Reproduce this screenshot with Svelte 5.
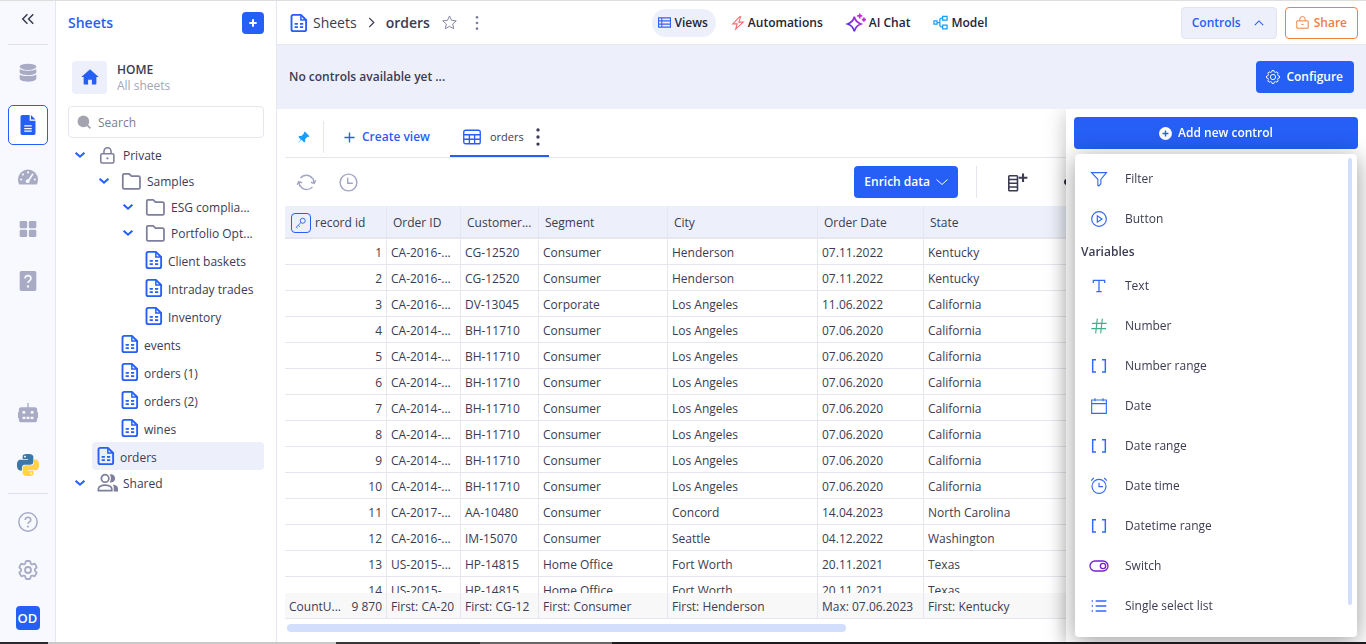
<script lang="ts">
    type TreeItem = { label: string; icon: string; depth: number; branch?: boolean; active?: boolean };

    let search = $state('');
    let menuOpen = $state(true);

    // outline of a cog wheel inside a 24x24 box
    function cog(teeth: number, inner: number, outer: number) {
        const points: string[] = [];
        const step = (Math.PI * 2) / teeth;
        for (let i = 0; i < teeth; i++) {
            [[-0.32, inner], [-0.18, outer], [0.18, outer], [0.32, inner]].forEach(([shift, r]) => {
                const a = (i + shift) * step;
                points.push(`${(12 + r * Math.sin(a)).toFixed(2)} ${(12 - r * Math.cos(a)).toFixed(2)}`);
            });
        }
        return 'M' + points.join('L') + 'Z';
    }

    const icons: Record<string, string> = {
        collapse: '<g stroke-width="2.6"><path d="M11 4l-8 8 8 8M21 4l-8 8 8 8"/></g>',
        database: '<g fill="currentColor" stroke="none"><ellipse cx="12" cy="4.6" rx="10" ry="3.8"/><path d="M2 7.2c2.4 2.6 17.6 2.6 20 0v3.6c0 5-20 5-20 0zM2 13.7c2.4 2.6 17.6 2.6 20 0v5c0 5-20 5-20 0z"/></g>',
        doc: '<path fill="currentColor" stroke="none" d="M5 0h9v7h7v15a2 2 0 0 1-2 2H5a2 2 0 0 1-2-2V2a2 2 0 0 1 2-2zM15.5 0l5.500 5.500h-5.500z"/><path stroke="#fff" stroke-width="1.5" d="M7.500 13h9M7.500 16.200h9M7.500 19.400h9"/>',
        gauge: '<path fill="currentColor" stroke="none" d="M12 3A12 12 0 0 0 0 15c0 2.500.7 4.500 1.500 6h21c.8-1.500 1.500-3.500 1.500-6A12 12 0 0 0 12 3z"/><g fill="#f8f9ff" stroke="none"><circle cx="12" cy="6.500" r="1.300"/><circle cx="6" cy="9" r="1.300"/><circle cx="3.800" cy="15" r="1.300"/><circle cx="20.200" cy="15" r="1.300"/><circle cx="11.500" cy="17" r="2.300"/></g><path stroke="#f8f9ff" stroke-width="2" d="M12 17l6-9"/>',
        grid: '<g fill="currentColor" stroke="none"><rect x="2" y="2.500" width="9" height="8.500" rx="1.500"/><rect x="13" y="2.500" width="9" height="8.500" rx="1.500"/><rect x="2" y="13" width="9" height="8.500" rx="1.500"/><rect x="13" y="13" width="9" height="8.500" rx="1.500"/></g>',
        quiz: '<rect x="2" y="0" width="20" height="24" rx="2" fill="currentColor" stroke="none"/><path stroke="#f8f9ff" stroke-width="2" d="M8.500 9c0-4.500 7-4.500 7 0 0 3-3.500 2.500-3.500 5.500"/><circle cx="12" cy="18.500" r="1.400" fill="#f8f9ff" stroke="none"/>',
        robot: '<rect x="1" y="5" width="22" height="18" rx="3" fill="currentColor" stroke="none"/><path d="M12 0v6M.8 11v7M23.200 11v7" stroke-width="1.600"/><g fill="#f8f9ff" stroke="none"><circle cx="7" cy="11" r="1.800"/><circle cx="17" cy="11" r="1.800"/><rect x="5.500" y="16.500" width="3.400" height="2.800"/><rect x="10.300" y="16.500" width="3.400" height="2.800"/><rect x="15.100" y="16.500" width="3.400" height="2.800"/></g>',
        python: '<path fill="#3b77a8" stroke="none" d="M14.25.18l.9.2.73.26.59.3.45.32.34.34.25.34.16.33.1.3.04.26.02.2-.01.13V8.5l-.05.63-.13.55-.21.46-.26.38-.3.31-.33.25-.35.19-.35.14-.33.1-.3.07-.26.04-.21.02H8.77l-.69.05-.59.14-.5.22-.41.27-.33.32-.27.35-.2.36-.15.37-.1.35-.07.32-.04.27-.02.21v3.06H3.17l-.21-.03-.28-.07-.32-.12-.35-.18-.36-.26-.36-.36-.35-.46-.32-.59-.28-.73-.21-.88-.14-1.05-.05-1.23.06-1.22.16-1.04.24-.87.32-.71.36-.57.4-.44.42-.33.42-.24.4-.16.36-.1.32-.05.24-.01h.16l.06.01h8.16v-.83H6.18l-.01-2.75-.02-.37.05-.34.11-.31.17-.28.25-.26.31-.23.38-.2.44-.18.51-.15.58-.12.64-.1.71-.06.77-.04.84-.02 1.27.05zm-6.3 1.98l-.23.33-.08.41.08.41.23.34.33.22.41.09.41-.09.33-.22.23-.34.08-.41-.08-.41-.23-.33-.33-.22-.41-.09-.41.09z"/><path fill="#ffd343" stroke="none" d="M21.04 6.11l.28.06.32.12.35.18.36.27.36.35.35.47.32.59.28.73.21.88.14 1.04.05 1.23-.06 1.23-.16 1.04-.24.86-.32.71-.36.57-.4.45-.42.33-.42.24-.4.16-.36.09-.32.05-.24.02-.16-.01h-8.22v.82h5.84l.01 2.76.02.36-.05.34-.11.31-.17.29-.25.25-.31.24-.38.2-.44.17-.51.15-.58.13-.64.09-.71.07-.77.04-.84.01-1.27-.04-1.07-.14-.9-.2-.73-.25-.59-.3-.45-.33-.34-.34-.25-.34-.16-.33-.1-.3-.04-.25-.02-.2.01-.13v-5.34l.05-.64.13-.54.21-.46.26-.38.3-.32.33-.24.35-.2.35-.14.33-.1.3-.06.26-.04.21-.02.13-.01h5.84l.69-.05.59-.14.5-.21.41-.28.33-.32.27-.35.2-.36.15-.36.1-.35.07-.32.04-.28.02-.21V6.07h2.09l.14.01zm-6.47 14.25l-.23.33-.08.41.08.41.23.33.33.23.41.08.41-.08.33-.23.23-.33.08-.41-.08-.41-.23-.33-.33-.23-.41-.08-.41.08z"/>',
        help: '<circle cx="12" cy="12" r="11"/><path stroke-width="2" d="M8.700 9.500c0-4.300 6.600-4.300 6.600 0 0 2.500-3.300 2.300-3.300 4.700"/><circle cx="12" cy="17.500" r="1.300" fill="currentColor" stroke="none"/>',
        gear: '<path d="M9.594 3.94c.09-.542.56-.94 1.11-.94h2.593c.55 0 1.020.398 1.110.94l.213 1.281c.063.374.313.686.645.87.074.04.147.083.22.127.325.196.72.257 1.075.124l1.217-.456a1.125 1.125 0 0 1 1.370.49l1.296 2.247a1.125 1.125 0 0 1-.26 1.431l-1.003.827c-.293.241-.438.613-.43.992a7.723 7.723 0 0 1 0 .255c-.008.378.137.75.43.991l1.004.827c.424.35.534.955.26 1.430l-1.298 2.247a1.125 1.125 0 0 1-1.369.491l-1.217-.456c-.355-.133-.75-.072-1.076.124a6.470 6.470 0 0 1-.22.128c-.331.183-.581.495-.644.869l-.213 1.281c-.09.543-.56.94-1.110.94h-2.594c-.55 0-1.019-.398-1.110-.94l-.213-1.281c-.062-.374-.312-.686-.644-.87a6.520 6.520 0 0 1-.22-.127c-.325-.196-.72-.257-1.076-.124l-1.217.456a1.125 1.125 0 0 1-1.369-.49l-1.297-2.247a1.125 1.125 0 0 1 .26-1.431l1.004-.827c.292-.24.437-.613.43-.991a6.932 6.932 0 0 1 0-.255c.007-.38-.138-.751-.43-.992l-1.004-.827a1.125 1.125 0 0 1-.26-1.430l1.297-2.247a1.125 1.125 0 0 1 1.370-.491l1.216.456c.356.133.751.072 1.076-.124.072-.044.146-.086.22-.128.332-.183.582-.495.644-.869l.214-1.280Z"/><circle cx="12" cy="12" r="3"/>',
        cog: `<path stroke-width="1.6" d="${cog(8, 9, 11.2)}"/><circle cx="12" cy="12" r="4.5" stroke-width="1.6"/>`,
        plus: '<path stroke-width="3" d="M12 1v22M1 12h22"/>',
        home: '<path fill="currentColor" stroke="none" d="M12 1.500L.5 12h3v8.500c0 1 .5 1.500 1.500 1.500h4.500v-6.500h5V22H19c1 0 1.500-.5 1.500-1.500V12h3z"/>',
        search: '<circle cx="11" cy="11" r="10" fill="currentColor" stroke="none"/><path stroke-width="3" d="M17 17l6 6"/>',
        chevron: '<path stroke-width="5" d="M1.500 6.500l10.500 9.500 10.500-9.500"/>',
        up: '<path stroke-width="2.600" d="M2 17l10-10 10 10"/>',
        down: '<path stroke-width="2" d="M1 7l11 10L23 7"/>',
        right: '<path stroke-width="2.600" d="M7 2l10 10L7 22"/>',
        lock: '<rect x="2.500" y="9.500" width="18.500" height="13" rx="2" stroke-width="2.200"/><path stroke-width="2.200" d="M7 9.500V6a5 5 0 0 1 10 0v3.500"/><circle cx="12" cy="16" r="1.600" fill="currentColor" stroke="none"/>',
        folder: '<path stroke-width="2.200" d="M1 4c0-1 .7-1.700 1.700-1.700h6.300l3 3h8.800c1.200 0 1.900.7 1.900 1.700v12.500c0 1-.7 1.800-1.800 1.800H2.800C1.700 21.300 1 20.500 1 19.500z"/>',
        sheet: '<path stroke-width="2.500" d="M14.500 1.200H4.500C3 1.200 2 2.100 2 3.500v17c0 1.400 1 2.300 2.500 2.300h14.500c1.500 0 2.500-.9 2.500-2.300V8z"/><path stroke-width="2" d="M14.500 1.500V8h6.500"/><path stroke-width="2.300" d="M6.200 13.200h4.300M13.300 13.200h4.300M6.200 17.500h4.300M13.300 17.500h4.300"/>',
        people: '<circle cx="8.500" cy="6.500" r="4.500" stroke-width="2.100"/><path stroke-width="2.100" d="M.5 21.200v-2.200c0-3.200 4.500-4.500 8-4.500s8 1.300 8 4.500v2.200z"/><path fill="currentColor" stroke="none" d="M14 1.800c2.700-.8 6.500.8 6.500 4.700s-3.800 5.500-6.500 4.700c2-2.600 2-6.800 0-9.400zM18 13.800c3.500.5 6 2.200 6 5v3.500h-5.200c.3-3.300.2-5.800-.8-8.500z"/>',
        star: '<path stroke-width="1.500" d="M12 1.500l3.200 7 7.600.8-5.700 5.100 1.600 7.500L12 18.100l-6.700 3.800 1.600-7.500L1.200 9.300l7.600-.8z"/>',
        dots: '<g fill="currentColor" stroke="none"><circle cx="12" cy="3.500" r="2"/><circle cx="12" cy="12" r="2"/><circle cx="12" cy="20.500" r="2"/></g>',
        views: '<path stroke-width="2" d="M1 3.500h22v17H1zM1 9h22M1 15h22M7 3.500v17"/>',
        bolt: '<path d="M14.500 1.500L3 13.500h7.500L8 22.500 21 10.500h-7.500l3-9z"/>',
        spark: '<defs><linearGradient id="spark" x1="0" y1="1" x2="1" y2="0"><stop offset="0.2" stop-color="#5b2be0"/><stop offset="1" stop-color="#c32bd0"/></linearGradient></defs><path stroke="url(#spark)" stroke-width="2" d="M10 4.500c1.200 5 3.200 7 8 8.700-4.800 1.700-6.800 3.700-8 8.800-1.200-5.100-3.200-7.100-8-8.800 4.800-1.700 6.800-3.700 8-8.700z"/><path stroke="#c32bd0" stroke-width="2" d="M16.500.5v6M13.500 3.500h6M21.500 5.500v5M19 8h5"/>',
        model: '<g stroke-width="2"><path d="M1.500 9.500h5v5h-5zM15.500 2h7v6h-7zM15.500 16h7v6h-7z"/><path d="M6.500 12h5M15.500 5h-2.500l-2 2v10l2 2h2.500"/></g>',
        shareLock: '<path stroke-width="1.800" d="M1.500 9h21v13.500h-21zM7 9V6a5 5 0 0 1 10 0v3M10 15.500h4"/>',
        pin: '<path fill="currentColor" stroke="none" d="M14.500 1L23 9.500l-2 1.500-1.500-.3-4.500 4.500.3 4-2 1.800-5-5L1 23l6-7.500-4.500-4.500 1.700-2 4 .3 4.600-4.600-.3-1.700z"/>',
        table: '<rect x="1" y="3" width="22" height="18" rx="2.500"/><path d="M1 9h22M1 15h22M8.500 9v12M15.500 9v12"/>',
        refresh: '<path d="M6 4.800A9.200 9.200 0 0 1 20.500 9M18 19.200A9.200 9.200 0 0 1 3.500 14M2.800 15V9.500M0 12l2.800-3.500L6.500 11M21.200 8.500V15M24 12l-2.800 3.500L17.500 13" transform="rotate(-14 12 12)"/>',
        clock: '<circle cx="12" cy="12" r="10.600"/><path d="M11 6v7h6.500"/>',
        column: '<rect x="1" y="3.500" width="11" height="19" rx="1" stroke-width="2"/><path stroke-width="2" d="M1 8.300h11M1 13h11M1 17.700h11"/><path stroke-width="2.600" d="M19 .5v11M13.500 6h11"/>',
        key: '<circle cx="15.500" cy="7.500" r="5"/><path d="M12 11L2.500 20.500l2.500 1.800M6.500 16.500l3 3"/>',
        circlePlus: '<circle cx="12" cy="12" r="12" fill="currentColor" stroke="none"/><path stroke="#265ff6" stroke-width="2.600" d="M12 6.500v11M6.500 12h11"/>',
        filter: '<path d="M.8 2.500h22.400l-8.400 10v6.500l-2.500 3h-2V12.500z" stroke-width="1.700"/>',
        play: '<circle cx="12" cy="12" r="11"/><path d="M9.500 7.200v9.600l7-4.800z"/>',
        text: '<path d="M3.500 7.500V3.500h17v4M12 3.500v17M8 20.500h8" stroke-width="1.900"/>',
        hash: '<path d="M9.500 1L7 23M17 1l-2.500 22M1.500 8h22M.5 16h22" stroke-width="1.700"/>',
        range: '<path stroke-width="2.200" d="M7.500 2.500H2.500v18.500h5M16.500 2.500h5v18.500h-5"/>',
        calendar: '<path stroke-width="1.700" d="M1 3h22v20H1zM1 8.500h22M6 .5V5M18 .5V5"/>',
        alarm: '<circle cx="12" cy="12.500" r="10.500" stroke-width="1.700"/><path stroke-width="1.700" d="M12 7v6h6M.2 4L4.200 0M23.800 4l-4-4"/>',
        toggle: '<rect x="-1.500" y="4.500" width="27" height="15" rx="7.500" stroke-width="2"/><circle cx="18" cy="12" r="4" stroke-width="2"/>',
        list: '<path d="M7 4.500h16M7 12h16M7 19.500h16M1 4.500h2M1 12h2M1 19.500h2" stroke-width="2"/>'
    };

    const iconSizes: Record<string, number> = { lock: 17, folder: 19, people: 20, sheet: 18 };

    const railItems = [
        { icon: 'database', label: 'Sources' },
        { icon: 'doc', label: 'Sheets', active: true },
        { icon: 'gauge', label: 'Dashboards' },
        { icon: 'grid', label: 'Apps' },
        { icon: 'quiz', label: 'Forms' }
    ];

    const tree: TreeItem[] = [
        { label: 'Private', icon: 'lock', depth: 0, branch: true },
        { label: 'Samples', icon: 'folder', depth: 1, branch: true },
        { label: 'ESG complia...', icon: 'folder', depth: 2, branch: true },
        { label: 'Portfolio Opt...', icon: 'folder', depth: 2, branch: true },
        { label: 'Client baskets', icon: 'sheet', depth: 2 },
        { label: 'Intraday trades', icon: 'sheet', depth: 2 },
        { label: 'Inventory', icon: 'sheet', depth: 2 },
        { label: 'events', icon: 'sheet', depth: 1 },
        { label: 'orders (1)', icon: 'sheet', depth: 1 },
        { label: 'orders (2)', icon: 'sheet', depth: 1 },
        { label: 'wines', icon: 'sheet', depth: 1 },
        { label: 'orders', icon: 'sheet', depth: 0, active: true },
        { label: 'Shared', icon: 'people', depth: 0, branch: true }
    ];

    const sections = [
        { icon: 'views', label: 'Views', color: '#2f64f5', size: 13, active: true },
        { icon: 'bolt', label: 'Automations', color: '#f4696d', size: 14 },
        { icon: 'spark', label: 'AI Chat', color: '#7a2be0', size: 20 },
        { icon: 'model', label: 'Model', color: '#1a9df0', size: 15 }
    ];

    const columns = ['Order ID', 'Customer...', 'Segment', 'City', 'Order Date', 'State'];

    const losAngeles = ['CA-2014-...', 'BH-11710', 'Consumer', 'Los Angeles', '07.06.2020', 'California'];
    const rows = [
        ['CA-2016-...', 'CG-12520', 'Consumer', 'Henderson', '07.11.2022', 'Kentucky'],
        ['CA-2016-...', 'CG-12520', 'Consumer', 'Henderson', '07.11.2022', 'Kentucky'],
        ['CA-2016-...', 'DV-13045', 'Corporate', 'Los Angeles', '11.06.2022', 'California'],
        ...Array(7).fill(losAngeles),
        ['CA-2017-...', 'AA-10480', 'Consumer', 'Concord', '14.04.2023', 'North Carolina'],
        ['CA-2016-...', 'IM-15070', 'Consumer', 'Seattle', '04.12.2022', 'Washington'],
        ['US-2015-...', 'HP-14815', 'Home Office', 'Fort Worth', '20.11.2021', 'Texas'],
        ['US-2015-...', 'HP-14815', 'Home Office', 'Fort Worth', '20.11.2021', 'Texas']
    ];
    const totals = ['First: CA-20', 'First: CG-12', 'First: Consumer', 'First: Henderson', 'Max: 07.06.2023', 'First: Kentucky'];

    const controls = [
        { icon: 'filter', label: 'Filter' },
        { icon: 'play', label: 'Button' }
    ];
    const variables = [
        { icon: 'text', label: 'Text' },
        { icon: 'hash', label: 'Number', color: '#3fae8c' },
        { icon: 'range', label: 'Number range' },
        { icon: 'calendar', label: 'Date' },
        { icon: 'range', label: 'Date range' },
        { icon: 'alarm', label: 'Date time' },
        { icon: 'range', label: 'Datetime range' },
        { icon: 'toggle', label: 'Switch', color: '#7420d0' },
        { icon: 'list', label: 'Single select list' }
    ];
</script>

{#snippet icon(name: string, size: number)}
    <svg width={size} height={size} viewBox="0 0 24 24" aria-hidden="true">{@html icons[name]}</svg>
{/snippet}

{#snippet menuItem(item: { icon: string; label: string; color?: string })}
    <li>
        <button class="menu-item">
            <span class="menu-icon" style:color={item.color}>{@render icon(item.icon, 16)}</span>
            {item.label}
        </button>
    </li>
{/snippet}

<div class="app">
    <div class="workspace">
        <nav class="rail" aria-label="Main">
            <button class="collapse" aria-label="Collapse">{@render icon('collapse', 14)}</button>
            <hr />
            {#each railItems as item}
                <button class="rail-item" class:active={item.active} aria-label={item.label}>
                    {@render icon(item.icon, 20)}
                </button>
            {/each}
            <div class="rail-bottom">
                <button class="rail-item robot" aria-label="Assistant">{@render icon('robot', 20)}</button>
                <button class="rail-item" aria-label="Python">{@render icon('python', 22)}</button>
                <hr />
                <button class="rail-item" aria-label="Help">{@render icon('help', 20)}</button>
                <button class="rail-item" aria-label="Settings">{@render icon('gear', 24)}</button>
                <button class="rail-item" aria-label="Account"><span class="avatar">OD</span></button>
            </div>
        </nav>

        <aside class="sidebar">
            <div class="sidebar-head">
                <h2>Sheets</h2>
                <button class="add" aria-label="Add sheet">{@render icon('plus', 8)}</button>
            </div>
            <a class="home" href="#home">
                <span class="home-icon">{@render icon('home', 18)}</span>
                <span class="home-text"><strong>HOME</strong><small>All sheets</small></span>
            </a>
            <label class="search">
                {@render icon('search', 14)}
                <input type="text" placeholder="Search" aria-label="Search" bind:value={search} />
            </label>
            <ul class="tree">
                {#each tree as item}
                    <li style:padding-left="{item.depth * 24}px">
                        <span class="toggle">
                            {#if item.branch}
                                <button aria-label="Toggle {item.label}">{@render icon('chevron', 10)}</button>
                            {/if}
                        </span>
                        <a href="#{item.label}" class:file={!item.branch} class:active={item.active}>
                            <span class="tree-icon">{@render icon(item.icon, iconSizes[item.icon])}</span>
                            <span class="label">{item.label}</span>
                        </a>
                    </li>
                {/each}
            </ul>
        </aside>

        <main>
            <header>
                <div class="crumbs">
                    <span class="blue">{@render icon('sheet', 18)}</span>
                    <a href="#sheets">Sheets</a>
                    <span class="sep">{@render icon('right', 11)}</span>
                    <h1>orders</h1>
                    <button aria-label="Favourite">{@render icon('star', 15)}</button>
                    <button aria-label="More">{@render icon('dots', 16)}</button>
                </div>
                <nav class="sections" aria-label="Sections">
                    {#each sections as item}
                        <a href="#{item.label}" class:active={item.active}>
                            <span style:color={item.color}>{@render icon(item.icon, item.size)}</span>
                            {item.label}
                        </a>
                    {/each}
                </nav>
                <div class="actions">
                    <button class="btn soft">Controls {@render icon('up', 10)}</button>
                    <button class="btn share">{@render icon('shareLock', 13)} Share</button>
                </div>
            </header>

            <section class="controls-bar">
                <p>No controls available yet ...</p>
                <button class="btn primary configure">{@render icon('cog', 14)} Configure</button>
            </section>

            <div class="content">
                <section class="pane">
                    <div class="tabs">
                        <button class="pin" aria-label="Pin">{@render icon('pin', 13)}</button>
                        <button class="create">{@render icon('plus', 11)} Create view</button>
                        <div class="tab">
                            <a href="#orders-view"><span>{@render icon('table', 18)}</span>orders</a>
                            <button aria-label="View menu">{@render icon('dots', 20)}</button>
                        </div>
                    </div>

                    <div class="toolbar">
                        <button class="tool" aria-label="Refresh">{@render icon('refresh', 19)}</button>
                        <button class="tool" aria-label="History">{@render icon('clock', 19)}</button>
                        <button class="btn primary enrich">Enrich data {@render icon('down', 12)}</button>
                        <span class="divider"></span>
                        <button class="tool dark" aria-label="Add column">{@render icon('column', 19)}</button>
                        <button class="more" aria-label="More tools"><svg width="6" height="6" viewBox="0 0 6 6"><circle cx="3" cy="3" r="3" /></svg></button>
                    </div>

                    <div class="grid">
                        <table>
                            <colgroup>
                                <col class="c-id" /><col class="c-order" /><col class="c-customer" /><col class="c-segment" /><col class="c-city" /><col class="c-date" /><col />
                            </colgroup>
                            <thead>
                                <tr>
                                    <th scope="col"><div class="record"><span class="key">{@render icon('key', 12)}</span>record id</div></th>
                                    {#each columns as column}
                                        <th scope="col">{column}</th>
                                    {/each}
                                </tr>
                            </thead>
                            <tbody>
                                {#each rows as row, i}
                                    <tr>
                                        <td class="num">{i + 1}</td>
                                        {#each row as cell}
                                            <td>{cell}</td>
                                        {/each}
                                    </tr>
                                {/each}
                            </tbody>
                            <tfoot>
                                <tr>
                                    <td><div class="count"><span>CountU...</span><span>9 870</span></div></td>
                                    {#each totals as total}
                                        <td><div>{total}</div></td>
                                    {/each}
                                </tr>
                            </tfoot>
                        </table>
                    </div>
                    <div class="hscroll"><span></span></div>
                </section>

                <aside class="panel">
                    <button class="btn primary new-control" aria-expanded={menuOpen} onclick={() => (menuOpen = !menuOpen)}>
                        {@render icon('circlePlus', 13)} Add new control
                    </button>
                    {#if menuOpen}
                        <div class="menu">
                            <div class="menu-list">
                                <ul>
                                    {#each controls as item}
                                        {@render menuItem(item)}
                                    {/each}
                                </ul>
                                <h3>Variables</h3>
                                <ul>
                                    {#each variables as item}
                                        {@render menuItem(item)}
                                    {/each}
                                </ul>
                            </div>
                            <div class="vscroll"><span></span></div>
                        </div>
                    {/if}
                </aside>
            </div>
        </main>
    </div>
    <div class="edge"></div>
</div>

<style>
    :global(body) {
        margin: 0;
    }

    .app {
        --blue: #265ff6;
        --text: #3b3b52;
        --muted: #a3a6c2;
        --line: #e6e7ee;
        --soft: #edf0fa;
        display: flex;
        flex-direction: column;
        height: 100vh;
        overflow: hidden;
        box-sizing: border-box;
        border-top: 1px solid #dedede;
        background: #fff;
        color: var(--text);
        font-family: 'Open Sans', 'Noto Sans', sans-serif;
        font-size: 12px;
        line-height: 16px;
    }

    .app * {
        box-sizing: border-box;
    }

    .workspace {
        display: flex;
        flex: 1;
        min-height: 0;
    }

    .edge {
        height: 2px;
        background: linear-gradient(90deg, #2a2a2e 48px, #c8c8c8 48px 336px, #3a3638 336px 480px, #6a6668 480px 612px, #1e1c1e 612px);
    }

    svg {
        display: block;
        flex: none;
        overflow: visible;
        fill: none;
        stroke: currentColor;
        stroke-width: 1.8;
    }

    button {
        display: flex;
        align-items: center;
        justify-content: center;
        padding: 0;
        border: none;
        background: none;
        color: inherit;
        font: inherit;
        cursor: pointer;
    }

    a {
        color: inherit;
        text-decoration: none;
    }

    ul {
        margin: 0;
        padding: 0;
        list-style: none;
    }

    h1, h2, h3, p {
        margin: 0;
        font-size: inherit;
    }

    hr {
        width: 40px;
        height: 1px;
        margin: 0;
        border: none;
        background: #e0e1e8;
    }

    .btn {
        height: 32px;
        border-radius: 4px;
        font-weight: 600;
        white-space: nowrap;
    }

    .primary {
        background: var(--blue);
        color: #fff;
    }

    .blue {
        color: var(--blue);
    }

    /* icon rail */

    .rail {
        display: flex;
        flex-direction: column;
        align-items: center;
        gap: 12px;
        width: 56px;
        flex: none;
        border-right: 1px solid var(--line);
        background: #f8f9ff;
    }

    .collapse {
        width: 40px;
        height: 36px;
        margin-bottom: -5px;
    }

    .collapse + hr {
        margin-bottom: -4px;
    }

    .rail-item {
        width: 40px;
        height: 40px;
        border-radius: 5px;
        color: #a9abc5;
    }

    .rail-item.active {
        border: 1px solid var(--blue);
        background: #fff;
        color: var(--blue);
    }

    .rail-item.robot {
        margin-bottom: 4px;
    }

    .rail-bottom {
        display: flex;
        flex-direction: column;
        gap: 8px;
        margin-top: auto;
        padding-bottom: 4px;
    }

    .avatar {
        width: 24px;
        border-radius: 4px;
        background: var(--blue);
        color: #fff;
        font-size: 13px;
        font-weight: 600;
        line-height: 24px;
    }

    /* sheets sidebar */

    .sidebar {
        width: 221px;
        flex: none;
        padding: 11px 12px;
        border-right: 1px solid var(--line);
    }

    .sidebar-head {
        display: flex;
        align-items: center;
        justify-content: space-between;
    }

    .sidebar-head h2 {
        color: var(--blue);
        font-size: 14px;
        font-weight: 600;
        line-height: 22px;
    }

    .add {
        width: 22px;
        height: 22px;
        border-radius: 4px;
        background: var(--blue);
        color: #fff;
    }

    .add :global(path) {
        stroke-width: 6;
    }

    .home {
        display: flex;
        align-items: center;
        gap: 10px;
        margin: 26px 0 12px;
        padding-left: 4px;
    }

    .home-icon {
        display: flex;
        align-items: center;
        justify-content: center;
        width: 35px;
        height: 33px;
        border-radius: 4px;
        background: var(--soft);
        color: var(--blue);
    }

    .home-text {
        padding-top: 2px;
    }

    .home-text strong {
        display: block;
        font-weight: 600;
    }

    .home-text small {
        display: block;
        color: #a5a6b8;
        font-size: 12px;
    }

    .search {
        display: flex;
        align-items: center;
        gap: 7px;
        height: 32px;
        margin-bottom: 4px;
        padding: 0 8px;
        border: 1px solid var(--line);
        border-radius: 4px;
        color: #a3a4b0;
    }

    .search input {
        width: 100%;
        padding: 2px 0 0;
        border: none;
        outline: none;
        background: none;
        color: var(--text);
        font: inherit;
    }

    .search input::placeholder {
        color: #7d7e8c;
    }

    .tree li {
        display: flex;
        align-items: center;
    }

    .toggle {
        display: flex;
        justify-content: center;
        width: 24px;
        flex: none;
        color: var(--blue);
    }

    .tree a {
        display: flex;
        flex: 1;
        align-items: center;
        gap: 6px;
        height: 26px;
        padding-left: 6px;
        border-radius: 4px;
        white-space: nowrap;
    }

    .tree a.file {
        height: 28px;
    }

    .tree a.active {
        background: var(--soft);
    }

    .label {
        padding-top: 2px;
    }

    .tree-icon {
        display: flex;
        justify-content: center;
        width: 19px;
        color: #7e7f9c;
    }

    .file .tree-icon {
        width: 16px;
        color: var(--blue);
    }

    .file .label {
        padding-top: 3px;
    }

    /* header */

    main {
        display: flex;
        flex: 1;
        flex-direction: column;
        min-width: 0;
    }

    header {
        display: grid;
        grid-template-columns: 1fr auto 1fr;
        align-items: center;
        height: 44px;
        flex: none;
        padding: 0 8px 0 13px;
        border-bottom: 1px solid var(--line);
    }

    .crumbs {
        display: flex;
        align-items: center;
        font-size: 14px;
    }

    .crumbs a {
        margin-left: 5px;
    }

    .sep {
        margin: 0 9px;
    }

    .crumbs h1 {
        font-size: 14px;
        font-weight: 600;
    }

    .crumbs button {
        margin-left: 12px;
        color: #7e7f9c;
    }

    .sections {
        display: flex;
        gap: 9px;
        color: #24243a;
        font-weight: 600;
    }

    .sections a {
        display: flex;
        align-items: center;
        gap: 3px;
        height: 28px;
        padding: 0 8px 0 6px;
        border-radius: 14px;
    }

    .sections a.active {
        background: var(--soft);
    }

    .actions {
        display: flex;
        justify-content: flex-end;
        gap: 8px;
    }

    .soft {
        gap: 13px;
        padding: 0 12px 0 10px;
        border: 1px solid #e2e5ef;
        background: var(--soft);
        color: var(--blue);
    }

    .share {
        gap: 5px;
        padding: 0 10px;
        border: 1px solid #f08040;
        color: #f08040;
    }

    .controls-bar {
        display: flex;
        align-items: center;
        justify-content: space-between;
        height: 64px;
        flex: none;
        padding: 0 12px;
        background: var(--soft);
        font-weight: 600;
    }

    .configure {
        gap: 6px;
        padding: 0 11px 0 10px;
    }

    /* view tabs and toolbar */

    .content {
        display: flex;
        flex: 1;
        min-height: 0;
        overflow: hidden;
    }

    .pane {
        display: flex;
        flex: 1;
        flex-direction: column;
        min-width: 0;
        padding-left: 8px;
        overflow: hidden;
    }

    .tabs {
        display: flex;
        align-items: center;
        height: 49px;
        flex: none;
        padding-top: 8px;
        border-bottom: 1px solid var(--line);
    }

    .pin {
        height: 32px;
        padding: 0 13px 0 12px;
        border-right: 1px solid var(--line);
        color: #1a9df0;
    }

    .create {
        gap: 7px;
        margin: 0 20px;
        color: var(--blue);
        font-weight: 600;
    }

    .tab {
        display: flex;
        align-items: center;
        align-self: stretch;
        padding: 2px 1px 0 13px;
        border-bottom: 2px solid var(--blue);
        font-size: 11px;
    }

    .tab a {
        display: flex;
        align-items: center;
        gap: 9px;
    }

    .tab a span {
        color: var(--blue);
    }

    .tab button {
        margin-left: 4px;
    }

    .toolbar {
        display: flex;
        align-items: center;
        height: 48px;
        flex: none;
        padding-left: 12px;
    }

    .tool {
        margin-right: 23px;
        color: var(--muted);
    }

    .tool.dark {
        margin-right: 37px;
        color: var(--text);
    }

    .enrich {
        gap: 6px;
        margin-left: auto;
        padding: 0 10px;
    }

    .divider {
        width: 1px;
        height: 32px;
        margin: 0 31px 0 18px;
        background: var(--line);
    }

    .more {
        justify-content: flex-start;
        width: 2px;
    }

    .more svg {
        fill: #24243a;
        stroke: none;
    }

    /* data grid */

    .grid {
        flex: 1;
        min-height: 0;
        overflow: hidden;
    }

    table {
        width: 100%;
        table-layout: fixed;
        border-spacing: 0;
    }

    .c-id {
        width: 102px;
    }

    .c-order {
        width: 74px;
    }

    .c-customer {
        width: 78px;
    }

    .c-segment {
        width: 129px;
    }

    .c-city {
        width: 150px;
    }

    .c-date {
        width: 106px;
    }

    th, td {
        height: 26px;
        padding: 2px 4px 0;
        border-right: 1px solid var(--line);
        border-bottom: 1px solid var(--line);
        overflow: hidden;
        text-align: left;
        white-space: nowrap;
    }

    th:last-child, td:last-child {
        border-right: none;
    }

    th {
        height: 33px;
        padding: 2px 6px 0;
        border-bottom-width: 2px;
        background: var(--soft);
        font-weight: 400;
    }

    .record {
        display: flex;
        align-items: center;
        gap: 4px;
    }

    .key {
        display: flex;
        align-items: center;
        justify-content: center;
        width: 20px;
        height: 20px;
        border: 1px solid var(--blue);
        border-radius: 4px;
        color: var(--blue);
    }

    .num {
        text-align: right;
    }

    tfoot {
        position: sticky;
        bottom: 0;
    }

    tfoot td {
        background: #f8f8f9;
    }

    tfoot div {
        overflow: hidden;
    }

    .count {
        display: flex;
        justify-content: space-between;
    }

    .hscroll {
        flex: none;
        padding: 5px 2px 10px;
    }

    .hscroll span {
        display: block;
        width: 72%;
        height: 8px;
        border-radius: 4px;
        background: #d3defd;
    }

    /* controls panel */

    .panel {
        position: relative;
        display: flex;
        flex-direction: column;
        gap: 5px;
        width: 300px;
        flex: none;
        padding: 8px 8px 5px;
        background: #fff;
        box-shadow: 0 4px 20px rgba(0, 0, 0, 0.25);
    }

    .new-control {
        gap: 6px;
        flex: none;
    }

    .menu {
        display: flex;
        flex: 1;
        min-height: 0;
        margin: 0 1px;
        padding: 4px 5px 4px 6px;
        border-radius: 4px;
        background: #fff;
        box-shadow: 0 4px 24px rgba(0, 0, 0, 0.4);
    }

    .menu-list {
        flex: 1;
        overflow: hidden;
    }

    .menu h3 {
        padding-top: 1px;
        font-weight: 600;
        line-height: 26px;
    }

    .menu-item {
        justify-content: flex-start;
        gap: 18px;
        width: 100%;
        height: 40px;
        padding: 2px 0 0 10px;
    }

    .menu-icon {
        color: #3468f5;
    }

    .vscroll {
        width: 4px;
    }

    .vscroll span {
        display: block;
        height: 94%;
        border-radius: 2px;
        background: #d3defd;
    }
</style>
